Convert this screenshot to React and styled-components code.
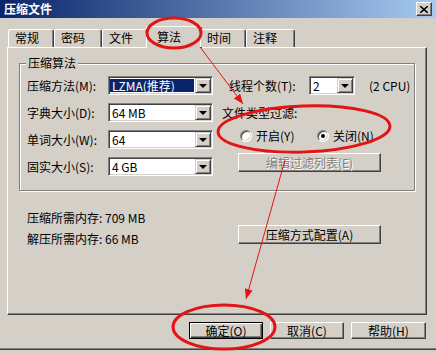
import React from "react";
import styled, { createGlobalStyle } from "styled-components";

const Global = createGlobalStyle`
  html, body {
    margin: 0;
    padding: 0;
    background: #d4d0c8;
  }
`;

const Page = styled.div`
  position: relative;
  width: 436px;
  height: 353px;
  overflow: hidden;
  font-family: "Noto Sans CJK SC", "Noto Sans", sans-serif;
  font-size: 12px;
  color: #000;
`;

const Win = styled.div`
  width: 436px;
  height: 349px;
  background: #d4d0c8;
  display: flex;
  flex-direction: column;
  border-bottom: 1px solid #404040;
  box-shadow: inset 0 -1px #808080;
`;

const TitleBar = styled.div`
  height: 18px;
  display: flex;
  align-items: center;
  justify-content: space-between;
  padding: 0 4px 0 4px;
  background: linear-gradient(to right, #0a246a, #a6caf0);
  color: #fff;
  font-weight: bold;
  font-size: 12px;
  line-height: 18px;
`;

const CloseBtn = styled.div`
  width: 16px;
  height: 14px;
  box-sizing: border-box;
  background: #d4d0c8;
  border: 1px solid;
  border-color: #fff #404040 #404040 #fff;
  box-shadow: inset -1px -1px #808080;
  display: flex;
  align-items: center;
  justify-content: center;
`;

const TabStrip = styled.div`
  height: 29px;
  display: flex;
  align-items: flex-end;
  padding-left: 8px;
  position: relative;
  z-index: 1;
`;

const Tab = styled.div`
  box-sizing: border-box;
  width: ${(p) => p.$w}px;
  height: ${(p) => (p.$active ? 22 : 18)}px;
  margin: 0 ${(p) => (p.$active ? -2 : 0)}px ${(p) => (p.$active ? -1 : 0)}px;
  padding-left: ${(p) => (p.$active ? 10 : 6)}px;
  padding-top: ${(p) => (p.$active ? 2 : 0)}px;
  background: #d4d0c8;
  border-top: 1px solid #fff;
  border-left: 1px solid #fff;
  border-right: 1px solid #404040;
  box-shadow: inset -1px 0 #808080;
  border-radius: 3px 3px 0 0;
  line-height: 16px;
  white-space: nowrap;
`;

const Panel = styled.div`
  box-sizing: border-box;
  margin-left: 7px;
  width: 420px;
  height: 268px;
  border-top: 1px solid #fff;
  border-left: 1px solid #fff;
  border-right: 1px solid #404040;
  border-bottom: 1px solid #404040;
  box-shadow: inset -1px -1px #808080;
  padding: 15px 0 0 11px;
`;

const Group = styled.div`
  position: relative;
  box-sizing: border-box;
  width: 396px;
  height: 128px;
  border: 1px solid #808080;
  box-shadow: inset 1px 1px #fff, 1px 1px #fff;
  padding: 12px 0 0 7px;
  display: flex;
`;

const Legend = styled.span`
  position: absolute;
  top: -8px;
  left: 6px;
  padding: 0 2px;
  background: #d4d0c8;
  line-height: 14px;
`;

const LeftCol = styled.div`
  width: 186px;
  display: flex;
  flex-direction: column;
  gap: 8px;
`;

const Row = styled.div`
  display: flex;
  align-items: center;
  height: 19px;
  padding-left: ${(p) => p.$indent || 0}px;
`;

const Label = styled.span`
  width: ${(p) => p.$w}px;
  flex-shrink: 0;
  line-height: 14px;
  white-space: nowrap;
`;

const ComboBox = styled.div`
  box-sizing: border-box;
  width: ${(p) => p.$w}px;
  height: 19px;
  padding: 1px;
  background: #fff;
  border: 1px solid;
  border-color: #808080 #fff #fff #808080;
  box-shadow: inset 1px 1px #404040, inset -1px -1px #d4d0c8;
  display: flex;
  align-items: center;
`;

const ComboValue = styled.div`
  flex: 1;
  align-self: stretch;
  display: flex;
  align-items: center;
  padding: 0 1px 0 0;
`;

const ValueText = styled.span`
  flex: 1;
  height: 13px;
  padding-left: 2px;
  display: flex;
  align-items: center;
  white-space: nowrap;
  background: ${(p) => (p.$selected ? "#0a246a" : "transparent")};
  color: ${(p) => (p.$selected ? "#fff" : "#000")};
`;

const DropBtn = styled.div`
  box-sizing: border-box;
  width: 16px;
  height: 15px;
  background: #d4d0c8;
  border: 1px solid;
  border-color: #d4d0c8 #404040 #404040 #d4d0c8;
  box-shadow: inset 1px 1px #fff, inset -1px -1px #808080;
  display: flex;
  align-items: center;
  justify-content: center;

  &::after {
    content: "";
    border-left: 4px solid transparent;
    border-right: 4px solid transparent;
    border-top: 4px solid #000;
  }
`;

const RightCol = styled.div`
  margin-left: 9px;
  display: flex;
  flex-direction: column;
`;

const CpuText = styled.span`
  margin-left: 14px;
  line-height: 14px;
`;

const FilterLabel = styled.div`
  margin-top: 11px;
  line-height: 14px;
`;

const RadioRow = styled.div`
  margin-top: 9px;
  height: 14px;
  display: flex;
  padding-left: 18px;
`;

const RadioItem = styled.label`
  width: 77px;
  display: flex;
  align-items: center;
  gap: 4px;
  line-height: 14px;
`;

const RadioDot = styled.span`
  box-sizing: border-box;
  width: 12px;
  height: 12px;
  border-radius: 50%;
  background: #fff;
  border: 1px solid;
  border-color: #808080 #fff #fff #808080;
  box-shadow: inset 1px 1px #404040, inset -1px -1px #d4d0c8;
  display: flex;
  align-items: center;
  justify-content: center;

  &::after {
    content: "";
    width: 4px;
    height: 4px;
    border-radius: 50%;
    background: ${(p) => (p.$checked ? "#000" : "transparent")};
  }
`;

const Button = styled.div`
  box-sizing: border-box;
  width: ${(p) => p.$w}px;
  height: ${(p) => p.$h || 19}px;
  margin-top: ${(p) => p.$mt || 0}px;
  margin-left: ${(p) => p.$ml || 0}px;
  background: #d4d0c8;
  border: 1px solid;
  border-color: ${(p) =>
    p.$default ? "#000" : "#fff #404040 #404040 #fff"};
  box-shadow: ${(p) =>
    p.$default
      ? "inset 1px 1px #fff, inset -1px -1px #404040, inset -2px -2px #808080"
      : "inset -1px -1px #808080"};
  display: flex;
  align-items: center;
  justify-content: center;
  line-height: 14px;
  white-space: nowrap;
  color: ${(p) => (p.$disabled ? "#808080" : "#000")};
  text-shadow: ${(p) => (p.$disabled ? "1px 1px #fff" : "none")};
`;

const BottomSection = styled.div`
  margin-top: 20px;
  display: flex;
`;

const MemCol = styled.div`
  box-sizing: border-box;
  width: 219px;
  padding-left: 8px;
  display: flex;
  flex-direction: column;
  gap: 7px;
  line-height: 14px;
`;

const ButtonRow = styled.div`
  margin-top: 7px;
  display: flex;
  justify-content: flex-end;
  gap: 7px;
  padding-right: 10px;
`;

const Overlay = styled.svg`
  position: absolute;
  top: 0;
  left: 0;
  z-index: 2;
  pointer-events: none;
`;

const tabs = [
  { name: "常规", w: 46 },
  { name: "密码", w: 48 },
  { name: "文件", w: 46 },
  { name: "算法", w: 56, active: true },
  { name: "时间", w: 46 },
  { name: "注释", w: 49 },
];

const options = [
  { label: "压缩方法(M):", value: "LZMA(推荐)", selected: true },
  { label: "字典大小(D):", value: "64 MB" },
  { label: "单词大小(W):", value: "64" },
  { label: "固实大小(S):", value: "4 GB" },
];

const Combo = ({ w, value, selected }) => (
  <ComboBox $w={w}>
    <ComboValue>
      <ValueText $selected={selected}>{value}</ValueText>
    </ComboValue>
    <DropBtn />
  </ComboBox>
);

const Annotations = () => (
  <Overlay width="436" height="353" viewBox="0 0 436 353">
    <defs>
      <marker
        id="head"
        viewBox="0 0 10 8"
        refX="10"
        refY="4"
        markerWidth="10"
        markerHeight="8"
        markerUnits="userSpaceOnUse"
        orient="auto"
      >
        <path d="M0 0 L10 4 L0 8 Z" fill="#e41414" />
      </marker>
    </defs>
    <g fill="none" stroke="#e41414">
      <ellipse cx="174" cy="33" rx="27" ry="15" strokeWidth="3" />
      <ellipse
        cx="304"
        cy="129"
        rx="86"
        ry="23"
        strokeWidth="3"
        transform="rotate(-2 304 129)"
      />
      <ellipse cx="224" cy="327" rx="51" ry="22" strokeWidth="3" />
      <line x1="200" y1="47" x2="243" y2="104" strokeWidth="1" markerEnd="url(#head)" />
      <line x1="285" y1="160" x2="246" y2="299" strokeWidth="1" markerEnd="url(#head)" />
    </g>
  </Overlay>
);

const App = () => {
  return (
    <Page>
      <Global />
      <Win>
        <TitleBar>
          <span>压缩文件</span>
          <CloseBtn>
            <svg width="8" height="7" viewBox="0 0 8 7">
              <path d="M0 0 L8 7 M8 0 L0 7" stroke="#000" strokeWidth="1.6" />
            </svg>
          </CloseBtn>
        </TitleBar>

        <TabStrip>
          {tabs.map((t) => (
            <Tab key={t.name} $w={t.w} $active={t.active}>
              {t.name}
            </Tab>
          ))}
        </TabStrip>

        <Panel>
          <Group>
            <Legend>压缩算法</Legend>
            <LeftCol>
              {options.map((o) => (
                <Row key={o.label}>
                  <Label $w={81}>{o.label}</Label>
                  <Combo w={105} value={o.value} selected={o.selected} />
                </Row>
              ))}
            </LeftCol>
            <RightCol>
              <Row $indent={7}>
                <Label $w={80}>线程个数(T):</Label>
                <Combo w={46} value="2" />
                <CpuText>(2 CPU)</CpuText>
              </Row>
              <FilterLabel>文件类型过滤:</FilterLabel>
              <RadioRow>
                <RadioItem>
                  <RadioDot />
                  开启(Y)
                </RadioItem>
                <RadioItem>
                  <RadioDot $checked />
                  关闭(N)
                </RadioItem>
              </RadioRow>
              <Button $w={143} $mt={10} $ml={16} $disabled>
                编辑过滤列表(E)
              </Button>
            </RightCol>
          </Group>

          <BottomSection>
            <MemCol>
              <span>压缩所需内存: 709 MB</span>
              <span>解压所需内存: 66 MB</span>
            </MemCol>
            <Button $w={143} $mt={14}>
              压缩方式配置(A)
            </Button>
          </BottomSection>
        </Panel>

        <ButtonRow>
          <Button $w={74} $h={17} $default>
            确定(O)
          </Button>
          <Button $w={74} $h={17}>
            取消(C)
          </Button>
          <Button $w={75} $h={17}>
            帮助(H)
          </Button>
        </ButtonRow>
      </Win>
      <Annotations />
    </Page>
  );
};

export default App;
